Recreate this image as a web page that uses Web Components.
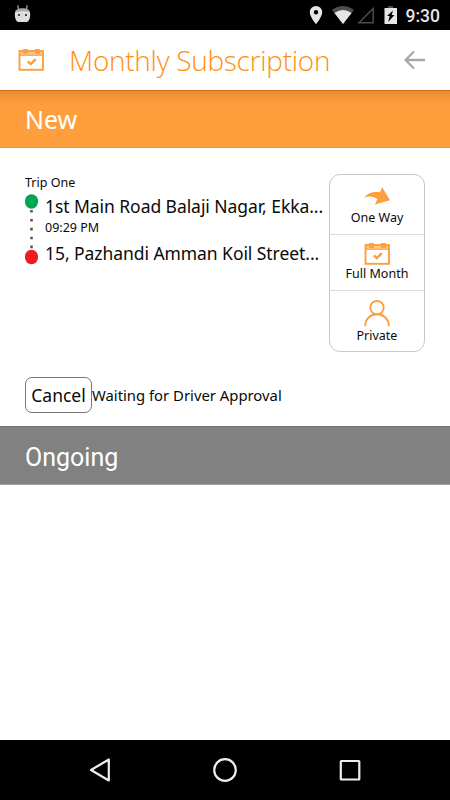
<!DOCTYPE html>
<html lang="en">
<head>
<meta charset="utf-8">
<title>Monthly Subscription</title>
<style>
  body {
    margin: 0;
    background: #fff;
    color: #0a0a0a;
    font-family: "Noto Sans", "Open Sans", sans-serif;
  }
</style>
</head>
<body>
<app-screen>
  <status-bar slot="top">9:30</status-bar>
  <title-bar slot="top">Monthly Subscription</title-bar>
  <section-band kind="new">New</section-band>
  <trip-card>
    <span slot="name">Trip One</span>
    <span slot="from">1st Main Road Balaji Nagar, Ekka...</span>
    <span slot="time">09:29 PM</span>
    <span slot="to">15, Pazhandi Amman Koil Street...</span>
    <option-list slot="options">
      <option-tile icon="arrow">One Way</option-tile>
      <option-tile icon="calendar">Full Month</option-tile>
      <option-tile icon="person">Private</option-tile>
    </option-list>
    <span slot="action">Cancel</span>
    <span slot="status">Waiting for Driver Approval</span>
  </trip-card>
  <section-band kind="ongoing">Ongoing</section-band>
  <nav-bar slot="bottom"></nav-bar>
</app-screen>

<script>
const calendar = `
  <svg width="26" height="22" viewBox="0 0 26 22">
    <rect x="1.500" y="2" width="23.500" height="18.800" fill="none" stroke="currentColor" stroke-width="1.900"/>
    <path d="M1.500 2H25v4.500H1.500z" fill="currentColor" opacity=".6"/>
    <path d="M1.500 6.300H25M5.300.5h4.200v3.800H5.300zM17.300.5h4.200v3.800h-4.200z" fill="currentColor" stroke="currentColor" stroke-width="1"/>
    <path d="M9.800 12.300l3 2.800 5-5" fill="none" stroke="currentColor" stroke-width="2.500"/>
  </svg>`;

const icons = {
  calendar,
  arrow: `
    <svg width="26" height="18" viewBox="0 0 26 18">
      <path d="M.3 10.500C4 5.500 10 4.200 16 5.200L18.200.2L26 13.200L10.800 17.600L13.500 12.100C9 9.300 4.500 9 .3 10.500z" fill="currentColor"/>
    </svg>`,
  person: `
    <svg width="26" height="27" viewBox="0 0 26 27">
      <g fill="none" stroke="currentColor" stroke-width="1.900">
        <circle cx="13" cy="7.600" r="6.700"/>
        <path d="M1.200 26.300C1.200 10.200 24.800 10.200 24.800 26.300"/>
      </g>
    </svg>`
};

class AppScreen extends HTMLElement{
  constructor(){
    super();
    this.attachShadow({mode: 'open'});
    this.shadowRoot.innerHTML = `
      <style>
      :host {
        display: flex;
        flex-direction: column;
        height: 800px;
        overflow: hidden;
      }
      main { flex: 1; }
      </style>
      <slot name="top"></slot>
      <main><slot></slot></main>
      <slot name="bottom"></slot>
    `;
  }
}

class StatusBar extends HTMLElement{
  constructor(){
    super();
    this.attachShadow({mode: 'open'});
    this.shadowRoot.innerHTML = `
      <style>
      :host {
        display: flex;
        align-items: center;
        height: 30px;
        box-sizing: border-box;
        padding: 1px 10px 0 14px;
        background: #000;
        color: #e6e6e6;
        font: 500 17.500px/30px Roboto, sans-serif;
      }
      svg { display: block; margin-top: -1px; }
      .icons { margin-left: auto; margin-right: 8px; }
      </style>
      <svg width="17" height="30" viewBox="0 0 17 30" fill="#dedede">
        <path d="M4.500 9L3.800 5.300M12.500 9l.7-3.700" stroke="#aaa" stroke-width="1.300"/>
        <path d="M1.200 12C1.200 7 15.800 7 15.800 12z" fill="#a8a8a8"/>
        <path d="M1 12.300C4 11 13 11 16 12.300C16.500 17 15.500 22 12.500 22H4.500C1.500 22 .5 17 1 12.300z"/>
        <path d="M4 14h2v2H4zM11 14h2v2h-2z" fill="#444"/>
      </svg>
      <svg class="icons" width="90" height="30" viewBox="308 0 90 30" fill="#e6e6e6">
        <path d="M316 6a6.200 6.200 0 0 0-6.200 6.200C309.800 17 316 24 316 24s6.200-7 6.200-11.800A6.200 6.200 0 0 0 316 6zm0 4a2.200 2.200 0 1 1 0 4.400 2.200 2.200 0 0 1 0-4.400z" fill-rule="evenodd"/>
        <path d="M332 10Q343 2 354 10L343 24z" fill="#4d4d4d"/>
        <path d="M334.400 13Q343 7 351.600 13L343 24z"/>
        <path d="M359 22.800L373.200 8.500V22.800z" fill="none" stroke="#4d4d4d" stroke-width="1.400"/>
        <path d="M388 6h5v2h-5z" fill="#4d4d4d"/>
        <path d="M384.500 8H397V24H384.500zM393 10.500L387 16h2.700l-1.500 6L394.500 15h-2.800z" fill-rule="evenodd"/>
      </svg>
      <slot></slot>
    `;
  }
}

class TitleBar extends HTMLElement{
  constructor(){
    super();
    this.attachShadow({mode: 'open'});
    this.shadowRoot.innerHTML = `
      <style>
      :host {
        display: flex;
        align-items: center;
        height: 60px;
        box-sizing: border-box;
        padding: 0 24px 0 18px;
        color: #ff8f10;
        font: 300 28px/61px "Open Sans", sans-serif;
        letter-spacing: -.28px;
      }
      .logo { display: flex; color: #ff9e3c; }
      h1 { margin: 0 auto 0 25px; font: inherit; white-space: nowrap; }
      svg { display: block; }
      </style>
      <span class="logo">${calendar}</span>
      <h1><slot></slot></h1>
      <svg width="22" height="20" viewBox="0 0 22 20" fill="none" stroke="#a9a9a9" stroke-width="2.300">
        <path d="M21 10H2M10 1.500L1.600 10l8.400 8.500"/>
      </svg>
    `;
  }
}

class SectionBand extends HTMLElement{
  constructor(){
    super();
    this.attachShadow({mode: 'open'});
    this.shadowRoot.innerHTML = `
      <style>
      :host {
        display: block;
        box-sizing: border-box;
        height: 58px;
        padding-left: 25px;
        color: #fff;
        font-size: 25px;
        line-height: 59px;
      }
      :host([kind="new"]) {
        background: linear-gradient(#cf6f10 0 1px, #e28c36 1px, #f79839 9px, #ff9e3c 17px);
        border-bottom: 1px solid #ff9120;
      }
      :host([kind="ongoing"]) {
        height: 59px;
        background: #818181;
        border-top: 1px solid #757575;
        border-bottom: 1px solid #a5a5a5;
        font-family: Roboto, sans-serif;
        line-height: 61px;
      }
      </style>
      <slot></slot>
    `;
  }
}

class TripCard extends HTMLElement{
  constructor(){
    super();
    this.attachShadow({mode: 'open'});
    this.shadowRoot.innerHTML = `
      <style>
      :host {
        display: block;
        box-sizing: border-box;
        height: 278px;
        padding: 26px 25px 0;
      }
      .top { display: flex; justify-content: space-between; height: 203px; }
      .trip { white-space: nowrap; }
      .name { font-size: 12.500px; line-height: 17px; }
      .route { display: flex; }
      .route svg { flex: none; display: block; }
      .stops { padding: 2px 0 0 6px; }
      .place { font-size: 17.500px; line-height: 26px; letter-spacing: -.06px; }
      .time { font-size: 12.500px; line-height: 17px; margin-bottom: 4px; }
      .bottom { display: flex; align-items: center; }
      button {
        box-sizing: border-box;
        width: 67px;
        height: 36px;
        padding: 0;
        border: 1px solid #777;
        border-radius: 7px;
        background: #fff;
        color: inherit;
        font: 17.500px/34px "Noto Sans", sans-serif;
      }
      .status { font-size: 14.850px; white-space: nowrap; }
      </style>
      <div class="top">
        <div class="trip">
          <div class="name"><slot name="name"></slot></div>
          <div class="route">
            <svg width="14" height="74" viewBox="0 0 14 74">
              <path d="M6.500 19V62" stroke="#555" stroke-width="2.600" stroke-dasharray="2.600 6.300"/>
              <ellipse cx="6.500" cy="10.500" rx="6.600" ry="7.300" fill="#00a651"/>
              <ellipse cx="6.500" cy="66" rx="6.600" ry="7.300" fill="#ed1c24"/>
            </svg>
            <div class="stops">
              <div class="place"><slot name="from"></slot></div>
              <div class="time"><slot name="time"></slot></div>
              <div class="place"><slot name="to"></slot></div>
            </div>
          </div>
        </div>
        <slot name="options"></slot>
      </div>
      <div class="bottom">
        <button><slot name="action"></slot></button>
        <span class="status"><slot name="status"></slot></span>
      </div>
    `;
  }
}

class OptionList extends HTMLElement{
  constructor(){
    super();
    this.attachShadow({mode: 'open'});
    this.shadowRoot.innerHTML = `
      <style>
      :host {
        display: grid;
        grid-template-rows: 60px 56px 60px;
        flex: none;
        align-self: flex-start;
        box-sizing: border-box;
        width: 96px;
        height: 178px;
        border: 1px solid #c8c8c8;
        border-radius: 11px;
      }
      ::slotted(:not(:last-child)) { border-bottom: 1px solid #ddd; }
      </style>
      <slot></slot>
    `;
  }
}

class OptionTile extends HTMLElement{
  constructor(){
    super();
    this.attachShadow({mode: 'open'});
    this.shadowRoot.innerHTML = `
      <style>
      :host {
        display: flex;
        flex-direction: column;
        align-items: center;
        justify-content: flex-end;
        box-sizing: border-box;
        padding-bottom: 8px;
        font-size: 12.500px;
        line-height: 17px;
        white-space: nowrap;
      }
      :host([icon="arrow"]) .icon { margin-bottom: 4px; }
      :host([icon="person"]) { padding-bottom: 7px; }
      .icon { display: flex; color: #ff9e3c; }
      </style>
      <span class="icon">${icons[this.getAttribute('icon')]}</span>
      <slot></slot>
    `;
  }
}

class NavBar extends HTMLElement{
  constructor(){
    super();
    this.attachShadow({mode: 'open'});
    this.shadowRoot.innerHTML = `
      <style>
      :host {
        display: flex;
        align-items: center;
        justify-content: center;
        gap: 101px;
        height: 60px;
        background: #000;
      }
      svg { display: block; fill: none; stroke: #eee; stroke-width: 2.200; stroke-linejoin: round; }
      </style>
      <svg width="24" height="26"><path d="M20.800 2.500v21L3 13z"/></svg>
      <svg width="24" height="26"><circle cx="12" cy="13" r="10.800"/></svg>
      <svg width="24" height="26"><rect x="2.800" y="4" width="18.500" height="18.500" rx=".5"/></svg>
    `;
  }
}

customElements.define('app-screen', AppScreen)
customElements.define('status-bar', StatusBar)
customElements.define('title-bar', TitleBar)
customElements.define('section-band', SectionBand)
customElements.define('trip-card', TripCard)
customElements.define('option-list', OptionList)
customElements.define('option-tile', OptionTile)
customElements.define('nav-bar', NavBar)
</script>
</body>
</html>
